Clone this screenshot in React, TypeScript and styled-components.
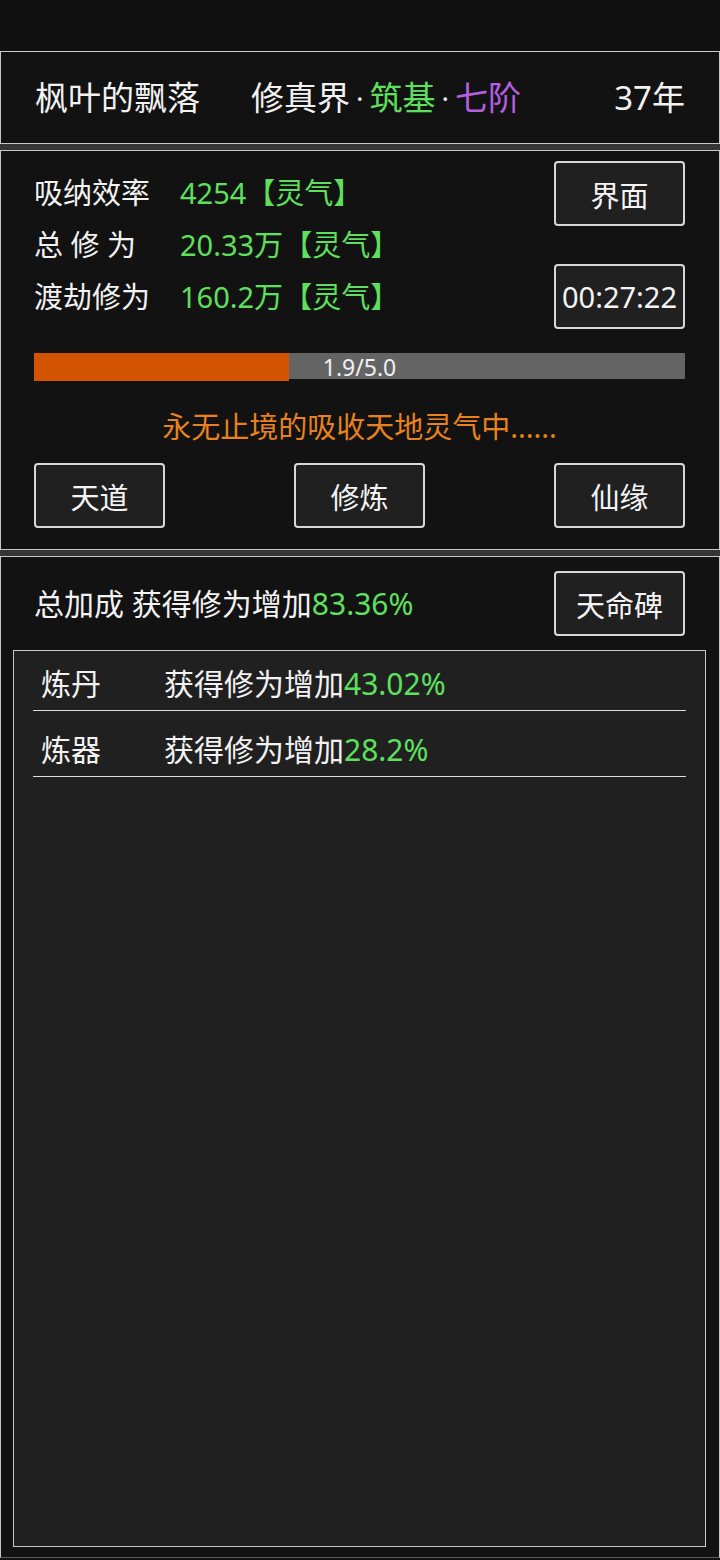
import styled, { createGlobalStyle } from 'styled-components';

const GlobalStyle = createGlobalStyle`
  html, body {
    margin: 0;
    padding: 0;
    background: #111111;
  }
  body {
    font-family: "Noto Sans", "Noto Sans CJK SC", sans-serif;
    color: #f2f2f2;
  }
`;

const GREEN = '#5ee05e';
const PURPLE = '#b45ee0';

const stats = [
    { label: '吸纳效率', value: '4254', unit: '【灵气】' },
    { label: '总 修 为', value: '20.33万', unit: '【灵气】' },
    { label: '渡劫修为', value: '160.2万', unit: '【灵气】' },
];

const bonuses = [
    { name: '炼丹', value: '43.02%' },
    { name: '炼器', value: '28.2%' },
];

const App = () => {
    const current = 1.9;
    const total = 5.0;
    const ratio = 0.392;

    return (
        <Page>
            <GlobalStyle />
            <TopBar />
            <Header>
                <PlayerName>枫叶的飘落</PlayerName>
                <Realm>
                    修真界<Dot>·</Dot>
                    <Colored color={GREEN}>筑基</Colored>
                    <Dot>·</Dot>
                    <Colored color={PURPLE}>七阶</Colored>
                </Realm>
                <Age>37年</Age>
            </Header>
            <Separator />
            <Panel>
                <StatsArea>
                    <StatsList>
                        {stats.map((s) => (
                            <StatLine key={s.label}>
                                <StatLabel>{s.label}</StatLabel>
                                <Colored color={GREEN}>
                                    {s.value}
                                    {s.unit}
                                </Colored>
                            </StatLine>
                        ))}
                    </StatsList>
                    <SideButtons>
                        <Button>界面</Button>
                        <Button>00:27:22</Button>
                    </SideButtons>
                </StatsArea>
                <ProgressBar>
                    <ProgressFill style={{ width: `${ratio * 100}%` }} />
                    <ProgressLabel>
                        {current.toFixed(1)}/{total.toFixed(1)}
                    </ProgressLabel>
                </ProgressBar>
                <StatusText>永无止境的吸收天地灵气中......</StatusText>
                <ActionRow>
                    <Button>天道</Button>
                    <Button>修炼</Button>
                    <Button>仙缘</Button>
                </ActionRow>
            </Panel>
            <Separator />
            <BonusPanel>
                <BonusHeader>
                    <BonusTitle>
                        总加成 获得修为增加<Colored color={GREEN}>83.36%</Colored>
                    </BonusTitle>
                    <Button>天命碑</Button>
                </BonusHeader>
                <BonusBox>
                    {bonuses.map((b) => (
                        <BonusRow key={b.name}>
                            <BonusName>{b.name}</BonusName>
                            <span>
                                获得修为增加<Colored color={GREEN}>{b.value}</Colored>
                            </span>
                        </BonusRow>
                    ))}
                </BonusBox>
            </BonusPanel>
        </Page>
    );
};

export default App;

const Page = styled.div`
    width: 720px;
    height: 1560px;
    display: flex;
    flex-direction: column;
    background: #111111;
    overflow: hidden;
`;

const TopBar = styled.div`
    height: 51px;
    flex-shrink: 0;
    background: #111111;
`;

const Header = styled.div`
    height: 91px;
    flex-shrink: 0;
    display: flex;
    align-items: center;
    padding: 0 34px;
    border: 1px solid #c8c8c8;
    background: #121212;
    font-size: 33px;
    line-height: 40px;
`;

const PlayerName = styled.span`
    width: 216px;
`;

const Realm = styled.span`
    display: flex;
    align-items: center;
`;

const Dot = styled.span`
    padding: 0 6px;
    font-size: 28px;
`;

const Age = styled.span`
    margin-left: auto;
`;

const Colored = styled.span<{ color: string }>`
    color: ${(p) => p.color};
`;

const Separator = styled.div`
    height: 6px;
    flex-shrink: 0;
    background: #353535;
`;

const Panel = styled.div`
    height: 398px;
    flex-shrink: 0;
    box-sizing: content-box;
    border: 1px solid #c8c8c8;
    background: #121212;
    padding: 0 34px 0 33px;
    display: flex;
    flex-direction: column;
    font-size: 29px;
`;

const StatsArea = styled.div`
    display: flex;
    justify-content: space-between;
    padding-top: 10px;
`;

const StatsList = styled.div`
    display: flex;
    flex-direction: column;
    padding-top: 6px;
`;

const StatLine = styled.div`
    display: flex;
    line-height: 52px;
    height: 52px;
`;

const StatLabel = styled.span`
    width: 146px;
    white-space: pre;
`;

const SideButtons = styled.div`
    display: flex;
    flex-direction: column;
    gap: 38px;
`;

const Button = styled.div`
    width: 131px;
    height: 65px;
    box-sizing: border-box;
    display: flex;
    align-items: center;
    justify-content: center;
    border: 2px solid #d8d8d8;
    border-radius: 4px;
    background: #202020;
    color: #f4f4f4;
    font-size: 29px;
    flex-shrink: 0;
`;

const ProgressBar = styled.div`
    margin-top: 24px;
    height: 26px;
    display: grid;
    background: #646464;
`;

const ProgressFill = styled.div`
    grid-area: 1 / 1;
    height: 100%;
    background: #d35400;
`;

const ProgressLabel = styled.div`
    grid-area: 1 / 1;
    text-align: center;
    font-size: 23px;
    line-height: 28px;
    color: #f0f0f0;
`;

const StatusText = styled.div`
    margin-top: 28px;
    text-align: center;
    color: #e8821e;
    font-size: 29px;
    line-height: 40px;
`;

const ActionRow = styled.div`
    margin-top: 16px;
    display: flex;
    justify-content: space-between;
`;

const BonusPanel = styled.div`
    flex: 1;
    border: 1px solid #c8c8c8;
    border-bottom-color: #5a5a5a;
    background: #121212;
    display: flex;
    flex-direction: column;
    padding: 14px 13px 10px 12px;
    margin-bottom: 2px;
    font-size: 30px;
`;

const BonusHeader = styled.div`
    display: flex;
    justify-content: space-between;
    align-items: center;
    padding: 0 21px;
`;

const BonusTitle = styled.span`
    line-height: 40px;
`;

const BonusBox = styled.div`
    margin-top: 14px;
    flex: 1;
    border: 1.5px solid #c8c8c8;
    background: #202020;
    padding: 0 19px;
    display: flex;
    flex-direction: column;
    gap: 6px;
`;

const BonusRow = styled.div`
    display: flex;
    padding: 7px 8px 0;
    line-height: 52px;
    border-bottom: 1.5px solid #dcdcdc;
`;

const BonusName = styled.span`
    width: 123px;
`;
